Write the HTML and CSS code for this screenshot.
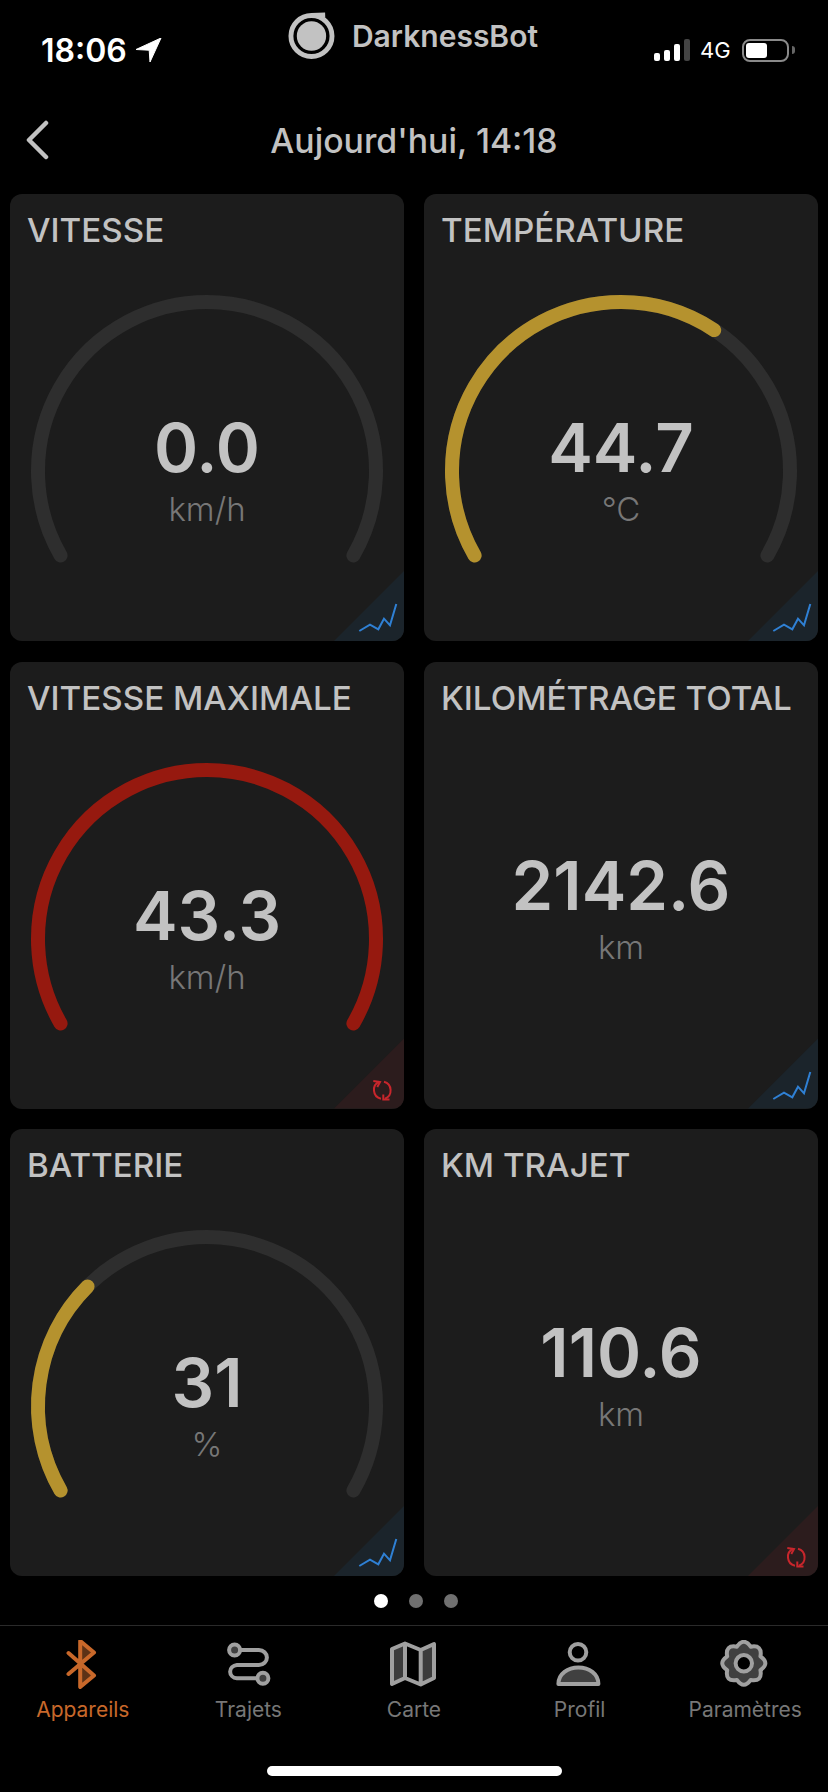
FILE: index.html
```html
<!DOCTYPE html>
<html>
<head>
	<title>DarknessBot</title>
	<link rel="stylesheet" href="styles.css">
</head>
<body>
	<div class="status">
		<div class="clock">
			<span>18:06</span>
			<svg class="arrow" width="26" height="25" viewBox="0 0 26 25"><path d="M25 0 L0 11.5 L13.2 12.2 L14 24 Z" fill="#fff" stroke="#fff" stroke-width="1" stroke-linejoin="round"/></svg>
		</div>
		<div class="brand">
			<svg width="48" height="48" viewBox="0 0 48 48">
				<circle cx="24" cy="24" r="21" class="logo-ring"/>
				<path d="M24 3 L38 2.5" class="logo-ring"/>
				<circle cx="24" cy="24" r="15" class="logo-disc"/>
			</svg>
			<span>DarknessBot</span>
		</div>
		<div class="signal">
			<div class="bars">
				<i class="bar b1"></i>
				<i class="bar b2"></i>
				<i class="bar b3"></i>
				<i class="bar b4"></i>
			</div>
			<span class="net">4G</span>
			<div class="battery"><i class="charge"></i></div>
			<i class="nub"></i>
		</div>
	</div>

	<div class="topbar">
		<svg class="back" width="26" height="40" viewBox="0 0 26 40"><path d="M22 3 L5 20 L22 37" fill="none" stroke="#c2c2c2" stroke-width="4.5" stroke-linecap="round" stroke-linejoin="round"/></svg>
		<h1>Aujourd'hui, 14:18</h1>
	</div>

	<div class="grid">
		<div class="card">
			<div class="title">VITESSE</div>
			<div class="dial">
				<svg class="gauge" width="394" height="280" viewBox="0 0 394 280">
					<path class="track" d="M50.6 261.5 A169 169 0 1 1 343.4 261.5"/>
				</svg>
				<div class="readout"><div class="value">0.0</div><div class="unit">km/h</div></div>
			</div>
			<div class="corner blue">
				<svg width="70" height="70" viewBox="0 0 70 70"><path class="chart" d="M25.3 60 L36 53.7 L44.3 58.3 L50 47.7 L56 54.3 L62.3 33"/></svg>
			</div>
		</div>

		<div class="card">
			<div class="title">TEMPÉRATURE</div>
			<div class="dial">
				<svg class="gauge" width="394" height="280" viewBox="0 0 394 280">
					<path class="track" d="M50.6 261.5 A169 169 0 1 1 343.4 261.5"/>
					<path class="fill gold" pathLength="240" stroke-dasharray="153.5 240" d="M50.6 261.5 A169 169 0 1 1 343.4 261.5"/>
				</svg>
				<div class="readout"><div class="value">44.7</div><div class="unit">°C</div></div>
			</div>
			<div class="corner blue">
				<svg width="70" height="70" viewBox="0 0 70 70"><path class="chart" d="M25.3 60 L36 53.7 L44.3 58.3 L50 47.7 L56 54.3 L62.3 33"/></svg>
			</div>
		</div>

		<div class="card">
			<div class="title">VITESSE MAXIMALE</div>
			<div class="dial">
				<svg class="gauge" width="394" height="280" viewBox="0 0 394 280">
					<path class="fill red" d="M50.6 261.5 A169 169 0 1 1 343.4 261.5"/>
				</svg>
				<div class="readout"><div class="value">43.3</div><div class="unit">km/h</div></div>
			</div>
			<div class="corner rose">
				<svg width="70" height="70" viewBox="0 0 70 70">
					<path class="cycle" d="M45.3 42.7 A9 9 0 0 0 47 59.7"/>
					<path class="cycle" d="M39.3 42 L46 43 L43.3 48"/>
					<path class="cycle" d="M50 42.7 A9 9 0 0 1 51 59.7"/>
					<path class="cycle" d="M49.3 55.5 V60.5 H55.5"/>
				</svg>
			</div>
		</div>

		<div class="card">
			<div class="title">KILOMÉTRAGE TOTAL</div>
			<div class="readout plain"><div class="value">2142.6</div><div class="unit">km</div></div>
			<div class="corner blue">
				<svg width="70" height="70" viewBox="0 0 70 70"><path class="chart" d="M25.3 60 L36 53.7 L44.3 58.3 L50 47.7 L56 54.3 L62.3 33"/></svg>
			</div>
		</div>

		<div class="card">
			<div class="title">BATTERIE</div>
			<div class="dial">
				<svg class="gauge" width="394" height="280" viewBox="0 0 394 280">
					<path class="track" d="M50.6 261.5 A169 169 0 1 1 343.4 261.5"/>
					<path class="fill gold" pathLength="240" stroke-dasharray="75 240" d="M50.6 261.5 A169 169 0 1 1 343.4 261.5"/>
				</svg>
				<div class="readout"><div class="value">31</div><div class="unit">%</div></div>
			</div>
			<div class="corner blue">
				<svg width="70" height="70" viewBox="0 0 70 70"><path class="chart" d="M25.3 60 L36 53.7 L44.3 58.3 L50 47.7 L56 54.3 L62.3 33"/></svg>
			</div>
		</div>

		<div class="card">
			<div class="title">KM TRAJET</div>
			<div class="readout plain"><div class="value">110.6</div><div class="unit">km</div></div>
			<div class="corner rose">
				<svg width="70" height="70" viewBox="0 0 70 70">
					<path class="cycle" d="M45.3 42.7 A9 9 0 0 0 47 59.7"/>
					<path class="cycle" d="M39.3 42 L46 43 L43.3 48"/>
					<path class="cycle" d="M50 42.7 A9 9 0 0 1 51 59.7"/>
					<path class="cycle" d="M49.3 55.5 V60.5 H55.5"/>
				</svg>
			</div>
		</div>
	</div>

	<div class="dots">
		<i class="dot on"></i>
		<i class="dot"></i>
		<i class="dot"></i>
	</div>

	<div class="tabs">
		<div class="tab active">
			<svg width="60" height="50" viewBox="0 0 60 50">
				<path class="bt-fill" d="M27.2 3 L41 12.5 L27.2 23 Z M27.2 24 L41 35.5 L27.2 45 Z"/>
				<path class="bt" d="M15.5 13 L41 35.5 L27.2 47 V1 L41 12.5 L15.5 34"/>
			</svg>
			<span>Appareils</span>
		</div>
		<div class="tab">
			<svg width="60" height="50" viewBox="0 0 60 50">
				<path class="line" d="M22 10 H40.9 A8 7.5 0 0 1 40.9 25 H18.9 A7.7 6.7 0 0 0 18.9 38.3 H38.9"/>
				<circle class="shape" cx="16.6" cy="10" r="5.5"/>
				<circle class="shape" cx="44.9" cy="38.3" r="5.5"/>
			</svg>
			<span>Trajets</span>
		</div>
		<div class="tab">
			<svg width="60" height="50" viewBox="0 0 60 50">
				<path class="panel" d="M8 9 L21 3.5 V38 L8 44 Z M36.7 10 L50 4 V38 L36.7 44 Z"/>
				<path class="line joined" d="M8 9 L21 3.5 L36.7 10 L50 4 V38 L36.7 44.5 L21 38 L8 44 Z M21 3.5 V38 M36.7 10 V44.5"/>
			</svg>
			<span>Carte</span>
		</div>
		<div class="tab">
			<svg width="60" height="50" viewBox="0 0 60 50">
				<circle class="ring" cx="28" cy="12.3" r="8.3"/>
				<path class="shape" d="M8.4 44 C8.4 33.5 18 27.5 28.4 27.5 C39 27.5 48.4 33.5 48.4 44 Z"/>
			</svg>
			<span>Profil</span>
		</div>
		<div class="tab">
			<svg width="60" height="50" viewBox="0 0 60 50">
				<g transform="translate(28.8 23.3)">
					<path class="shape" d="M-6.89 -16.63 Q0 -26.5 6.89 -16.63 Q18.74 -18.74 16.63 -6.89 Q26.5 0 16.63 6.89 Q18.74 18.74 6.89 16.63 Q0 26.5 -6.89 16.63 Q-18.74 18.74 -16.63 6.89 Q-26.5 0 -16.63 -6.89 Q-18.74 -18.74 -6.89 -16.63 Z"/>
					<circle class="ring" r="8.2"/>
				</g>
			</svg>
			<span>Paramètres</span>
		</div>
	</div>

	<div class="home"></div>
</body>
</html>
```

FILE: styles.css
```css
* {
	box-sizing: border-box;
}
body {
	display: flex;
	flex-direction: column;
	width: 828px;
	height: 1792px;
	margin: 0;
	overflow: hidden;
	background-color: #000;
	color: #c2c2c2;
	font-family: Inter, "Liberation Sans", sans-serif;
}
svg {
	display: block;
}

/* status bar */
.status {
	display: grid;
	grid-template-columns: 247px 250px 1fr;
	height: 90px;
	padding-left: 41px;
}
.clock {
	display: flex;
	align-items: center;
	gap: 11px;
	height: 24px;
	margin-top: 38px;
	color: #fff;
	font-size: 32px;
	font-weight: 600;
}
.arrow {
	margin-left: -2px;
}
.brand {
	display: flex;
	align-items: center;
	gap: 17px;
	height: 48px;
	margin-top: 12px;
	font-size: 30px;
	font-weight: 600;
	white-space: nowrap;
}
.logo-ring {
	fill: none;
	stroke: #c2c2c2;
	stroke-width: 5;
}
.logo-disc {
	fill: #c2c2c2;
}
.signal {
	display: flex;
	align-items: center;
	height: 24px;
	margin-top: 38px;
	margin-left: 116px;
}
.bars {
	display: flex;
	align-items: flex-end;
	gap: 4px;
	height: 22px;
}
.bar {
	width: 6px;
	border-radius: 2px;
	background-color: #fff;
}
.b1 {
	height: 8px;
}
.b2 {
	height: 11px;
}
.b3 {
	height: 17px;
}
.b4 {
	height: 22px;
	background-color: #444;
}
.net {
	margin-left: 10px;
	color: #fff;
	font-size: 22px;
}
.battery {
	width: 47px;
	height: 23px;
	margin-left: 11px;
	padding: 2px;
	border: 2px solid #8a8a8a;
	border-radius: 8px;
}
.charge {
	display: block;
	width: 21px;
	height: 15px;
	border-radius: 3px;
	background-color: #fff;
}
.nub {
	width: 3px;
	height: 8px;
	margin-left: 3px;
	border-radius: 0 3px 3px 0;
	background-color: #666;
}

/* header */
.topbar {
	position: relative;
	height: 100px;
	margin-bottom: 4px;
	display: flex;
	align-items: center;
	justify-content: center;
}
.topbar h1 {
	margin: 0;
	font-size: 33.8px;
	font-weight: 500;
}
.back {
	position: absolute;
	left: 24px;
	top: 30px;
}

/* cards */
.grid {
	display: grid;
	grid-template-columns: 394px 394px;
	grid-auto-rows: 447px;
	gap: 20.5px 20px;
	padding: 0 10px;
}
.card {
	position: relative;
	overflow: hidden;
	border-radius: 12px;
	background-color: #1c1c1c;
}
.title {
	height: 40px;
	margin: 16px 0 0 17px;
	font-size: 33.2px;
	font-weight: 500;
	line-height: 40px;
	white-space: nowrap;
}
.dial {
	display: grid;
}
.dial > * {
	grid-area: 1 / 1;
}
.gauge {
	margin-top: 44px;
}
.track,
.fill {
	fill: none;
	stroke-width: 14;
	stroke-linecap: round;
}
.track {
	stroke: #2e2e2e;
}
.gold {
	stroke: #b5922e;
}
.red {
	stroke: #96190f;
}
.readout {
	margin-top: 163px;
	text-align: center;
}
.readout.plain {
	margin-top: 133px;
}
.value {
	font-size: 67px;
	font-weight: 600;
	line-height: 70px;
}
.unit {
	margin-top: 6px;
	color: #777;
	font-size: 33px;
	font-weight: 300;
	line-height: 40px;
}
.corner {
	position: absolute;
	right: 0;
	bottom: 0;
	width: 70px;
	height: 70px;
	clip-path: polygon(100% 0, 100% 100%, 0 100%);
}
.blue {
	background-color: #1b242b;
}
.rose {
	background-color: #2c1c1d;
}
.chart {
	fill: none;
	stroke: #2f80d4;
	stroke-width: 2;
}
.cycle {
	fill: none;
	stroke: #c8262c;
	stroke-width: 2;
}

/* pager */
.dots {
	display: flex;
	justify-content: center;
	gap: 21px;
	margin-top: 18px;
	margin-bottom: 17px;
	margin-left: 4px;
}
.dot {
	width: 14px;
	height: 14px;
	border-radius: 50%;
	background-color: #707070;
}
.dot.on {
	background-color: #fff;
}

/* tab bar */
.tabs {
	display: grid;
	grid-template-columns: repeat(5, 1fr);
	padding-top: 14px;
	border-top: 1px solid #2a2a2a;
}
.tab {
	display: flex;
	flex-direction: column;
	align-items: center;
	gap: 8px;
	color: #777;
	font-size: 21px;
	line-height: 24px;
}
.tab.active {
	color: #c8682a;
}
.bt {
	fill: none;
	stroke: #c8682a;
	stroke-width: 4;
	stroke-linecap: round;
	stroke-linejoin: round;
}
.bt-fill {
	fill: #5c3216;
}
.line {
	fill: none;
	stroke: #a0a0a0;
	stroke-width: 4;
}
.line.joined {
	stroke-linejoin: round;
}
.panel {
	fill: #3c3c3c;
}
.shape {
	fill: #404040;
	stroke: #a0a0a0;
	stroke-width: 4;
	stroke-linejoin: round;
}
.ring {
	fill: #000;
	stroke: #a0a0a0;
	stroke-width: 4;
}

.home {
	width: 295px;
	height: 10px;
	margin: auto auto 16px;
	border-radius: 5px;
	background-color: #fff;
}
```
